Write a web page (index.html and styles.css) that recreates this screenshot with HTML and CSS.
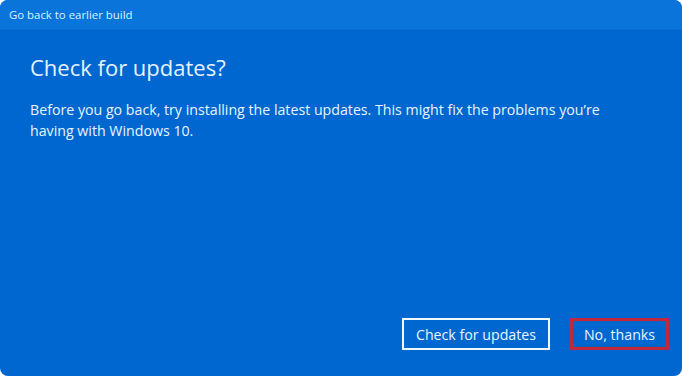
FILE: index.html
```html
<!DOCTYPE html>
<html>
<head>
<meta charset="utf-8">
<link rel="stylesheet" href="styles.css">
</head>
<body>
<div class="window">
  <div class="titlebar">Go back to earlier build</div>
  <div class="content">
    <h1 class="heading">Check for updates?</h1>
    <p class="desc">Before you go back, try installing the latest updates. This might fix the problems you’re having with Windows 10.</p>
    <div class="actions">
      <button class="btn">Check for updates</button>
      <button class="btn btn-focus">No, thanks</button>
    </div>
  </div>
</div>
</body>
</html>
```
FILE: styles.css
```css
html, body {
  margin: 0;
  padding: 0;
  background: #ffffff;
}
body {
  width: 682px;
  height: 376px;
  overflow: hidden;
  font-family: "Open Sans", "Noto Sans", sans-serif;
}
.window {
  width: 682px;
  height: 376px;
  background: #0067d0;
  border-radius: 8px;
  overflow: hidden;
  display: flex;
  flex-direction: column;
}
.titlebar {
  height: 30px;
  background: #0a74da;
  color: #d8f2ff;
  font-size: 11.4px;
  line-height: 30px;
  padding-left: 9px;
  border-bottom: 1px solid #0a6fd4;
  box-sizing: border-box;
}
.content {
  flex: 1;
  display: flex;
  flex-direction: column;
  padding: 20px 13px 26px 30px;
}
.heading {
  margin: 0;
  font-weight: 400;
  font-size: 22px;
  line-height: 34px;
  color: #e4f4ff;
}
.desc {
  margin: 15px 0 0 0;
  font-size: 14.2px;
  line-height: 21px;
  color: #e8f5ff;
  max-width: 585px;
}
.actions {
  margin-top: auto;
  display: flex;
  justify-content: flex-end;
  gap: 20px;
}
.btn {
  font-family: inherit;
  font-size: 14.2px;
  color: #e8f5ff;
  background: transparent;
  border: 2px solid #f0f8ff;
  height: 32px;
  width: 148px;
  padding: 0;
  box-sizing: border-box;
  margin: 0;
}
.btn-focus {
  border: 3px solid #c0283f;
  box-shadow: inset 0 0 0 1px #1a5fb0;
  width: 99px;
}
```
